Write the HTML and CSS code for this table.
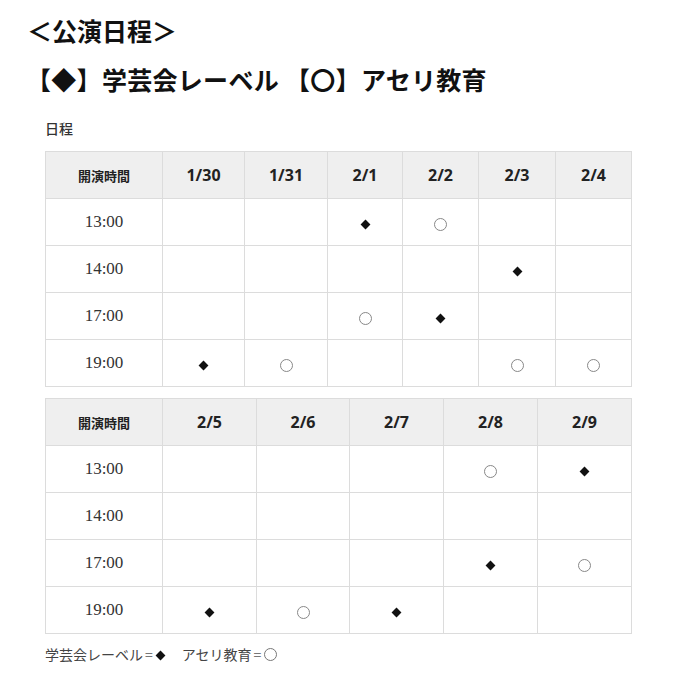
FILE: index.html
```html
<!DOCTYPE html>
<html lang="ja">
<head>
<meta charset="utf-8">
<link rel="stylesheet" href="styles.css">
</head>
<body>
<div class="page">
  <h1 class="title">＜公演日程＞</h1>
  <h2 class="subtitle">【◆】学芸会レーベル 【〇】アセリ教育</h2>
  <div class="label">日程</div>
  <table class="sched t1">
    <colgroup>
      <col class="c-time"><col style="width:82px"><col style="width:83px"><col style="width:75px"><col style="width:76px"><col style="width:77px"><col style="width:76px">
    </colgroup>
    <tr class="head"><th class="jp">開演時間</th><th>1/30</th><th>1/31</th><th>2/1</th><th>2/2</th><th>2/3</th><th>2/4</th></tr>
    <tr><td class="time">13:00</td><td></td><td></td><td><span class="dia"></span></td><td><span class="cir"></span></td><td></td><td></td></tr>
    <tr><td class="time">14:00</td><td></td><td></td><td></td><td></td><td><span class="dia"></span></td><td></td></tr>
    <tr><td class="time">17:00</td><td></td><td></td><td><span class="cir"></span></td><td><span class="dia"></span></td><td></td><td></td></tr>
    <tr><td class="time">19:00</td><td><span class="dia"></span></td><td><span class="cir"></span></td><td></td><td></td><td><span class="cir"></span></td><td><span class="cir"></span></td></tr>
  </table>
  <table class="sched t2">
    <colgroup>
      <col class="c-time"><col style="width:94px"><col style="width:93px"><col style="width:94px"><col style="width:94px"><col style="width:94px">
    </colgroup>
    <tr class="head"><th class="jp">開演時間</th><th>2/5</th><th>2/6</th><th>2/7</th><th>2/8</th><th>2/9</th></tr>
    <tr><td class="time">13:00</td><td></td><td></td><td></td><td><span class="cir"></span></td><td><span class="dia"></span></td></tr>
    <tr><td class="time">14:00</td><td></td><td></td><td></td><td></td><td></td></tr>
    <tr><td class="time">17:00</td><td></td><td></td><td></td><td><span class="dia"></span></td><td><span class="cir"></span></td></tr>
    <tr><td class="time">19:00</td><td><span class="dia"></span></td><td><span class="cir"></span></td><td><span class="dia"></span></td><td></td><td></td></tr>
  </table>
  <p class="legend">学芸会レーベル<span class="eq">=</span><span class="ldia"></span>　アセリ教育<span class="eq">=</span><span class="lcir"></span></p>
</div>
</body>
</html>
```
FILE: styles.css
```css
html, body {
  margin: 0;
  padding: 0;
  background: #fff;
}
body {
  font-family: "Noto Sans CJK JP", "Noto Sans", sans-serif;
  color: #222;
}
.page {
  padding: 12px 0 0 45px;
  width: 586px;
}
.title {
  margin: 0 0 0 -18px;
  font-size: 25px;
  font-weight: 700;
  line-height: 36px;
  color: #111;
}
.subtitle {
  margin: 11px 0 0 -19px;
  font-size: 25px;
  font-weight: 700;
  line-height: 40px;
  color: #111;
  letter-spacing: 0.3px;
}
.label {
  margin-top: 19px;
  font-size: 14px;
  font-weight: 500;
  line-height: 20px;
  color: #333;
}
.sched {
  border-collapse: collapse;
  table-layout: fixed;
  width: 587px;
}
.t1 { margin-top: 13px; }
.t2 { margin-top: 11px; }
.c-time { width: 117px; }
.sched th, .sched td {
  border: 1px solid #dcdcdc;
  height: 46px;
  padding: 0;
  text-align: center;
  vertical-align: middle;
}
.sched th {
  background: #efefef;
  font-family: "Noto Sans", "Open Sans", sans-serif;
  font-weight: 700;
  font-size: 16px;
  color: #222;
}
.sched th.jp {
  font-family: "Noto Sans CJK JP", sans-serif;
  font-size: 13px;
}
.time {
  font-family: "Liberation Serif", "DejaVu Serif", serif;
  font-size: 17px;
  color: #333;
}
.dia {
  display: inline-block;
  width: 7px;
  height: 7px;
  background: #111;
  transform: rotate(45deg);
  vertical-align: middle;
}
.cir {
  display: inline-block;
  width: 11px;
  height: 11px;
  border: 1px solid #888;
  border-radius: 50%;
  vertical-align: middle;
}
.legend {
  margin: 10px 0 0;
  font-size: 14px;
  line-height: 20px;
  color: #444;
}
.eq {
  margin: 0 2px;
  color: #777;
}
.ldia {
  display: inline-block;
  width: 7px;
  height: 7px;
  background: #111;
  transform: rotate(45deg);
  margin: 0 4px 0 2px;
  vertical-align: 1px;
}
.lcir {
  display: inline-block;
  width: 11px;
  height: 11px;
  border: 1px solid #777;
  border-radius: 50%;
  margin-left: 1px;
  vertical-align: -1px;
}
```
